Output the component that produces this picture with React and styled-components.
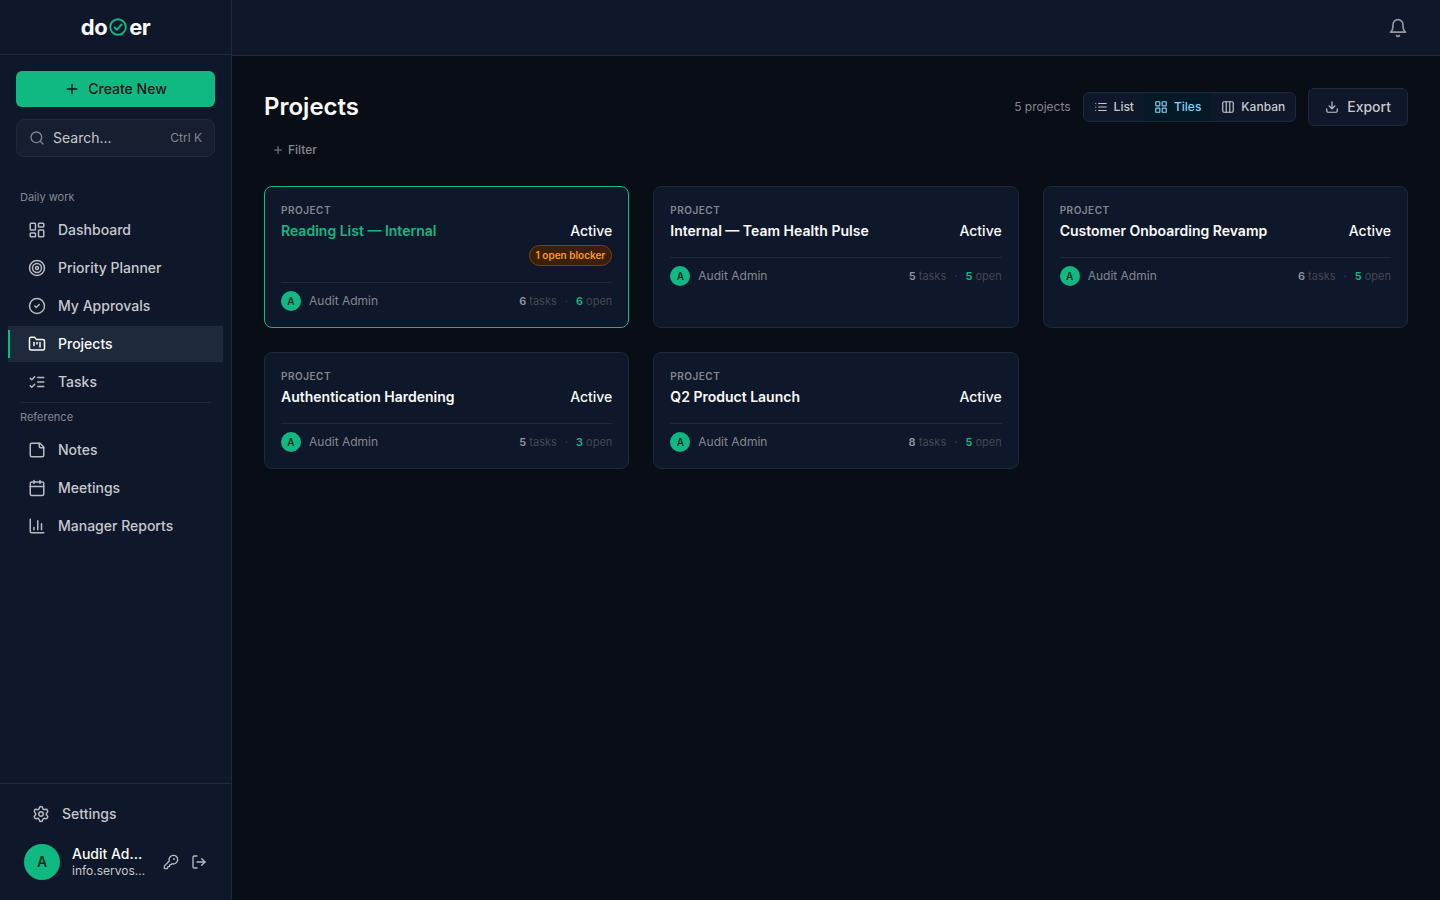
import React from "react";
import styled, { createGlobalStyle, css } from "styled-components";
import {
  Plus, Search, LayoutDashboard, Target, CircleCheck, FolderKanban,
  Calendar, ChartColumn, Settings, KeyRound, LogOut,
  LayoutGrid, Columns3, Download,
} from "lucide-react";

const color = {
  page: "#090d16",
  panel: "#0f172a",
  line: "#1e293b",
  active: "#1e293b",
  green: "#10b981",
  ink: "#052e1b",
  text: "#fafafa",
  soft: "#c8c8cc",
  icon: "#b9bbc1",
  muted: "#85878e",
  faint: "#45474f",
};

const Global = createGlobalStyle`
  *, *::before, *::after { box-sizing: border-box; }
  body {
    margin: 0;
    background: ${color.page};
    color: ${color.text};
    font: 400 14px/20px Inter, "Liberation Sans", sans-serif;
  }
  button { font: inherit; color: inherit; border: 0; background: none; padding: 0; cursor: pointer; }
  a { color: inherit; text-decoration: none; }
  h1, h2, p, ul { margin: 0; padding: 0; }
  ul { list-style: none; }
  svg { flex: none; display: block; }
`;

const Shell = styled.div`
  display: flex;
  min-height: 100vh;
`;

const Sidebar = styled.aside`
  display: flex;
  flex-direction: column;
  flex: 0 0 232px;
  min-width: 0;
  background: ${color.panel};
  border-right: 1px solid ${color.line};
`;

const Brand = styled.a`
  display: flex;
  align-items: center;
  justify-content: center;
  gap: 2px;
  height: 55px;
  border-bottom: 1px solid ${color.line};
  font-size: 22px;
  line-height: 28px;
  font-weight: 700;
  letter-spacing: -0.5px;
  svg { color: ${color.green}; }
`;

const Actions = styled.div`
  display: flex;
  flex-direction: column;
  gap: 12px;
  padding: 16px 16px 32px;
`;

const CreateButton = styled.button`
  display: flex;
  align-items: center;
  justify-content: center;
  gap: 8px;
  height: 36px;
  border-radius: 6px;
  background: ${color.green};
  color: #09121a;
  font-weight: 500;
`;

const SearchButton = styled.button`
  display: flex;
  align-items: center;
  gap: 8px;
  height: 38px;
  padding: 0 12px;
  border: 1px solid ${color.line};
  border-radius: 8px;
  background: #161e2f;
  color: ${color.soft};
  svg { color: ${color.muted}; }
`;

const Shortcut = styled.kbd`
  margin-left: auto;
  font: inherit;
  font-size: 12px;
  color: ${color.muted};
`;

const Nav = styled.nav`
  flex: 1;
  padding: 0 8px;
`;

const NavGroup = styled.section`
  & + & {
    margin: 2px 0 0;
  }
  & + &::before {
    content: "";
    display: block;
    height: 1px;
    margin: 0 12px 6px;
    background: ${color.line};
  }
`;

const NavHeading = styled.h2`
  padding: 0 12px;
  margin-bottom: 7px;
  font-size: 11px;
  line-height: 16px;
  font-weight: 400;
  color: ${color.muted};
`;

const NavList = styled.ul`
  display: grid;
  gap: 2px;
`;

const NavLink = styled.a`
  display: flex;
  align-items: center;
  gap: 12px;
  height: 36px;
  padding-left: 20px;
  font-weight: 500;
  color: ${color.soft};
  svg { color: ${(p) => (p.$active ? color.text : color.icon)}; }
  ${(p) => p.$active && css`
    position: relative;
    background: ${color.active};
    color: ${color.text};
    &::before {
      content: "";
      position: absolute;
      left: 0;
      top: 4px;
      bottom: 4px;
      width: 2px;
      background: ${color.green};
    }
  `}
`;

const SidebarFoot = styled.footer`
  padding: 12px 12px 20px;
  border-top: 1px solid ${color.line};
`;

const Account = styled.div`
  display: flex;
  align-items: center;
  gap: 12px;
  padding: 12px 12px 0;
`;

const Avatar = styled.span`
  display: grid;
  place-items: center;
  flex: none;
  width: ${(p) => p.$size}px;
  height: ${(p) => p.$size}px;
  border-radius: 50%;
  background: ${color.green};
  color: ${color.ink};
  font-size: ${(p) => (p.$size > 24 ? 14 : 10)}px;
  line-height: 16px;
  font-weight: 600;
`;

const AccountText = styled.div`
  flex: 1;
  min-width: 0;
  p {
    overflow: hidden;
    text-overflow: ellipsis;
    white-space: nowrap;
  }
`;

const AccountName = styled.p`
  line-height: 18px;
  font-weight: 500;
`;

const AccountMail = styled.p`
  font-size: 12px;
  line-height: 16px;
  color: ${color.soft};
`;

const AccountTools = styled.div`
  display: flex;
  gap: 12px;
  padding-left: 4px;
  color: ${color.icon};
`;

const Main = styled.div`
  flex: 1;
  min-width: 0;
`;

const TopBar = styled.header`
  display: flex;
  align-items: center;
  justify-content: flex-end;
  height: 56px;
  padding: 0 32px;
  background: ${color.panel};
  border-bottom: 1px solid ${color.line};
  color: #94979f;
`;

const Content = styled.main`
  padding: 32px;
`;

const PageHead = styled.div`
  display: flex;
  align-items: center;
  gap: 12px;
`;

const Title = styled.h1`
  flex: 1;
  font-size: 24px;
  line-height: 32px;
  font-weight: 600;
`;

const Count = styled.span`
  font-size: 12px;
  line-height: 16px;
  color: ${color.muted};
`;

const ViewSwitch = styled.div`
  display: flex;
  height: 30px;
  overflow: hidden;
  border: 1px solid ${color.line};
  border-radius: 6px;
  background: ${color.panel};
`;

const ViewButton = styled.button`
  display: flex;
  align-items: center;
  gap: 6px;
  padding: 0 10px;
  font-size: 12px;
  line-height: 16px;
  font-weight: 500;
  color: ${(p) => (p.$active ? "#7dd3fc" : color.soft)};
  background: ${(p) => (p.$active ? "#031a26" : "transparent")};
`;

const ExportButton = styled.button`
  display: flex;
  align-items: center;
  gap: 8px;
  height: 38px;
  padding: 0 16px;
  border: 1px solid ${color.line};
  border-radius: 6px;
  background: ${color.panel};
  color: ${color.soft};
  font-weight: 500;
`;

const FilterButton = styled.button`
  display: flex;
  align-items: center;
  gap: 4px;
  height: 24px;
  margin: 12px 0 24px;
  padding: 0 8px;
  font-size: 12px;
  line-height: 16px;
  font-weight: 500;
  color: ${color.muted};
`;

const CardGrid = styled.div`
  display: grid;
  grid-template-columns: repeat(3, minmax(0, 1fr));
  gap: 24px;
`;

const Card = styled.article`
  padding: 16px;
  border: 1px solid ${(p) => (p.$selected ? color.green : color.line)};
  border-radius: 8px;
  background: ${color.panel};
`;

const Kicker = styled.p`
  margin-bottom: 4px;
  font-size: 10px;
  line-height: 14px;
  font-weight: 600;
  letter-spacing: 0.5px;
  text-transform: uppercase;
  color: ${color.muted};
`;

const CardHead = styled.div`
  display: flex;
  justify-content: space-between;
  gap: 12px;
`;

const CardTitle = styled.h2`
  font-size: 14px;
  line-height: 20px;
  font-weight: 600;
  color: ${(p) => (p.$selected ? color.green : color.text)};
`;

const Status = styled.div`
  display: flex;
  flex-direction: column;
  align-items: flex-end;
  gap: 4px;
  font-weight: 500;
`;

const Blocker = styled.span`
  padding: 2px 6px;
  border: 1px solid #78430d;
  border-radius: 11px;
  background: #3a1f09;
  color: #fe9a00;
  font-size: 10px;
  line-height: 15px;
  font-weight: 600;
`;

const CardFoot = styled.div`
  display: flex;
  align-items: center;
  gap: 8px;
  margin-top: 16px;
  padding-top: 8px;
  border-top: 1px solid ${color.line};
  font-size: 12px;
  line-height: 16px;
  color: ${color.muted};
`;

const Tally = styled.span`
  display: flex;
  gap: 8px;
  margin-left: auto;
  font-size: 11px;
  line-height: 17px;
  color: ${color.faint};
`;

const Figure = styled.b`
  font-weight: 600;
  color: ${(p) => (p.$open ? color.green : "#94969d")};
`;

function Glyph({ size, strokeWidth = 2, children }) {
  return (
    <svg width={size} height={size} viewBox="0 0 24 24" fill="none" stroke="currentColor"
      strokeWidth={strokeWidth} strokeLinecap="round" strokeLinejoin="round" aria-hidden="true">
      {children}
    </svg>
  );
}

const BrandCheck = () => (
  <Glyph size={18} strokeWidth={2.5}>
    <circle cx="12" cy="12" r="10.4" />
    <path d="m7.4 12.6 3.2 3.2 6.2-7.2" />
  </Glyph>
);

const BellIcon = (props) => (
  <Glyph {...props}>
    <path d="M6 8a6 6 0 0 1 12 0c0 7 3 9 3 9H3s3-2 3-9" />
    <path d="M10.3 21a1.94 1.94 0 0 0 3.4 0" />
  </Glyph>
);

const ListIcon = (props) => (
  <Glyph {...props}>
    <path d="M8 6h13M8 12h13M8 18h13M3 6h.01M3 12h.01M3 18h.01" />
  </Glyph>
);

const TasksIcon = (props) => (
  <Glyph {...props}>
    <path d="m3 17 2 2 4-4M3 7l2 2 4-4M13 6h8M13 12h8M13 18h8" />
  </Glyph>
);

const NoteIcon = (props) => (
  <Glyph {...props}>
    <path d="M16 3H5a2 2 0 0 0-2 2v14a2 2 0 0 0 2 2h14a2 2 0 0 0 2-2V8Z" />
    <path d="M15 3v4a2 2 0 0 0 2 2h4" />
  </Glyph>
);

const navGroups = [
  { heading: "Daily work", items: [
    ["Dashboard", LayoutDashboard], ["Priority Planner", Target], ["My Approvals", CircleCheck],
    ["Projects", FolderKanban], ["Tasks", TasksIcon],
  ] },
  { heading: "Reference", items: [
    ["Notes", NoteIcon], ["Meetings", Calendar], ["Manager Reports", ChartColumn],
  ] },
];

const projects = [
  { name: "Reading List — Internal", tasks: 6, open: 6, blocker: "1 open blocker", selected: true },
  { name: "Internal — Team Health Pulse", tasks: 5, open: 5 },
  { name: "Customer Onboarding Revamp", tasks: 6, open: 5 },
  { name: "Authentication Hardening", tasks: 5, open: 3 },
  { name: "Q2 Product Launch", tasks: 8, open: 5 },
];

const views = [["List", ListIcon], ["Tiles", LayoutGrid], ["Kanban", Columns3]];

function ProjectCard({ name, tasks, open, blocker, selected }) {
  return (
    <Card $selected={selected}>
      <Kicker>Project</Kicker>
      <CardHead>
        <CardTitle $selected={selected}>{name}</CardTitle>
        <Status>
          <span>Active</span>
          {blocker && <Blocker>{blocker}</Blocker>}
        </Status>
      </CardHead>
      <CardFoot>
        <Avatar $size={20}>A</Avatar>
        <span>Audit Admin</span>
        <Tally>
          <span><Figure>{tasks}</Figure> tasks</span>
          <span>·</span>
          <span><Figure $open>{open}</Figure> open</span>
        </Tally>
      </CardFoot>
    </Card>
  );
}

export default function App() {
  return (
    <Shell>
      <Global />
      <Sidebar>
        <Brand href="#" aria-label="doer">
          <span>do</span>
          <BrandCheck />
          <span>er</span>
        </Brand>
        <Actions>
          <CreateButton type="button"><Plus size={16} />Create New</CreateButton>
          <SearchButton type="button">
            <Search size={16} />Search...<Shortcut>Ctrl K</Shortcut>
          </SearchButton>
        </Actions>
        <Nav>
          {navGroups.map((group) => (
            <NavGroup key={group.heading}>
              <NavHeading>{group.heading}</NavHeading>
              <NavList>
                {group.items.map(([label, Icon]) => (
                  <li key={label}>
                    <NavLink href="#" $active={label === "Projects"}>
                      <Icon size={18} />{label}
                    </NavLink>
                  </li>
                ))}
              </NavList>
            </NavGroup>
          ))}
        </Nav>
        <SidebarFoot>
          <NavLink href="#"><Settings size={18} />Settings</NavLink>
          <Account>
            <Avatar $size={36}>A</Avatar>
            <AccountText>
              <AccountName>Audit Admin</AccountName>
              <AccountMail>info.servosys@gmail.com</AccountMail>
            </AccountText>
            <AccountTools>
              <button type="button" aria-label="Change password"><KeyRound size={16} /></button>
              <button type="button" aria-label="Log out"><LogOut size={16} /></button>
            </AccountTools>
          </Account>
        </SidebarFoot>
      </Sidebar>
      <Main>
        <TopBar>
          <button type="button" aria-label="Notifications"><BellIcon size={20} /></button>
        </TopBar>
        <Content>
          <PageHead>
            <Title>Projects</Title>
            <Count>5 projects</Count>
            <ViewSwitch>
              {views.map(([label, Icon]) => (
                <ViewButton key={label} type="button" $active={label === "Tiles"}>
                  <Icon size={14} />{label}
                </ViewButton>
              ))}
            </ViewSwitch>
            <ExportButton type="button"><Download size={14} />Export</ExportButton>
          </PageHead>
          <FilterButton type="button"><Plus size={12} />Filter</FilterButton>
          <CardGrid>
            {projects.map((project) => <ProjectCard key={project.name} {...project} />)}
          </CardGrid>
        </Content>
      </Main>
    </Shell>
  );
}
